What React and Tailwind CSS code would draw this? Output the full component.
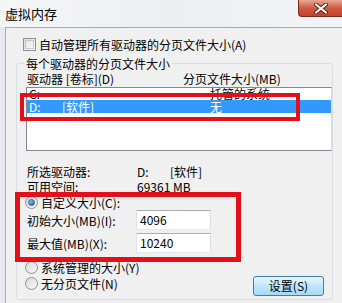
import React from 'react';

const font = { fontFamily: '"Noto Sans CJK SC", "Liberation Sans", sans-serif' };

// Win7 style checkbox
const CheckBox = () => (
  <span className="w-[13px] h-[13px] border border-[#8f8f8f] bg-gradient-to-br from-[#dcdcdc] to-[#fbfbfb] flex items-center justify-center shrink-0">
    <span className="w-[9px] h-[9px] border border-[#c8c8c8] bg-gradient-to-br from-[#e4e4e4] to-[#f8f8f8]" />
  </span>
);

const Radio = ({ checked }) => (
  <span className="w-[13px] h-[13px] rounded-full border border-[#8f8f8f] bg-gradient-to-br from-[#d8d8d8] to-[#fbfbfb] flex items-center justify-center shrink-0">
    {checked && <span className="w-[7px] h-[7px] rounded-full bg-gradient-to-br from-[#8fd0ff] to-[#1a63b8] border border-[#2a5d9a]" />}
  </span>
);

const Input = ({ value }) => (
  <div className="w-[75px] h-[20px] bg-white border border-[#abadb3] border-l-[#e2e3ea] border-r-[#dbdfe6] border-b-[#e3e9ef] flex items-center pl-[3px] text-[12px] leading-[14px]">
    {value}
  </div>
);

export default function App() {
  return (
    <div className="relative w-[342px] h-[303px] overflow-hidden bg-[#e6eaee] text-black text-[12px] leading-[15px]" style={font}>
      {/* title bar */}
      <div className="h-[27px] flex items-start pl-[5px] pt-[6px] bg-gradient-to-r from-[#f4f6f8] via-[#eceef0] to-[#f2f4f6]">
        <span className="text-[13px] leading-[16px]">虚拟内存</span>
      </div>
      <div className="absolute top-0 right-0 w-[44px] h-[17px] rounded-bl-[4px] border border-t-0 border-r-0 border-[#7a2a1c] bg-gradient-to-b from-[#e9a795] via-[#cf5a40] to-[#c2412a] flex items-center justify-center">
        <svg width="14" height="11" viewBox="0 0 14 11">
          <path d="M2 1.5 L12 9.5 M12 1.5 L2 9.5" stroke="#5a2016" strokeWidth="4" strokeLinecap="round" />
          <path d="M2 1.5 L12 9.5 M12 1.5 L2 9.5" stroke="#ffffff" strokeWidth="2.2" strokeLinecap="round" />
        </svg>
      </div>

      <div className="flex">
        <div className="w-[5px] shrink-0" />
        {/* client area */}
        <div className="flex-1 h-[276px] bg-[#f0f0f0] border-l border-t border-[#a5acb5]">
          <div className="flex items-center gap-[3px] ml-[17px] mt-[10px] h-[13px]">
            <CheckBox />
            <span>自动管理所有驱动器的分页文件大小(A)</span>
          </div>

          <fieldset className="ml-[10px] mt-[5px] w-[317px] h-[244px] border border-[#d5dfe5] rounded-[3px]">
            <legend className="ml-[7px] px-[2px]">每个驱动器的分页文件大小</legend>
            <div className="flex h-[16px] pl-[10px]">
              <span className="w-[156px]">驱动器 [卷标](D)</span>
              <span>分页文件大小(MB)</span>
            </div>

            {/* drive list */}
            <div className="ml-[9px] w-[306px] h-[64px] bg-white border border-[#828790] border-r-[#d9dde3]">
              <div className="flex h-[12px] leading-[12px] pl-[2px] overflow-hidden">
                <span className="w-[181px]">C:</span>
                <span>托管的系统</span>
              </div>
              <div className="flex h-[13px] leading-[13px] pl-[2px] bg-[#3399ff] text-white">
                <span className="w-[33px]">D:</span>
                <span className="w-[148px]">[软件]</span>
                <span>无</span>
              </div>
            </div>

            <div className="mt-[13px] pl-[10px]">
              <div className="flex h-[15px]">
                <span className="w-[110px]">所选驱动器:</span>
                <span className="w-[33px]">D:</span>
                <span>[软件]</span>
              </div>
              <div className="flex h-[15px]">
                <span className="w-[110px]">可用空间:</span>
                <span>69361 MB</span>
              </div>
            </div>

            <div className="flex items-center gap-[3px] ml-[8px] mt-[1px] h-[15px]">
              <Radio checked />
              <span>自定义大小(C):</span>
            </div>
            <div className="flex items-center h-[20px] pl-[10px]">
              <span className="w-[109px]">初始大小(MB)(I):</span>
              <Input value="4096" />
            </div>
            <div className="flex items-center h-[20px] pl-[10px] mt-[3px]">
              <span className="w-[109px]">最大值(MB)(X):</span>
              <Input value="10240" />
            </div>
            <div className="flex items-center gap-[3px] ml-[8px] mt-[7px] h-[15px]">
              <Radio />
              <span>系统管理的大小(Y)</span>
            </div>
            <div className="flex items-start justify-between ml-[8px] mr-[8px] mt-[1px]">
              <div className="flex items-center gap-[3px] h-[15px]">
                <Radio />
                <span>无分页文件(N)</span>
              </div>
              <button className="w-[71px] h-[20px] rounded-[3px] border border-[#3c7fb1] bg-gradient-to-b from-[#eaf6fd] via-[#bee6fd] to-[#a7d9f5] text-[12px] leading-[14px] flex items-center justify-center">
                设置(S)
              </button>
            </div>
          </fieldset>
        </div>
      </div>

      {/* red annotation boxes */}
      <div className="absolute left-[20px] top-[93px] w-[280px] h-[28px] border-[4px] border-[#e3101c]" />
      <div className="absolute left-[15px] top-[192px] w-[226px] h-[70px] border-[5px] border-[#e3101c]" />
    </div>
  );
}
